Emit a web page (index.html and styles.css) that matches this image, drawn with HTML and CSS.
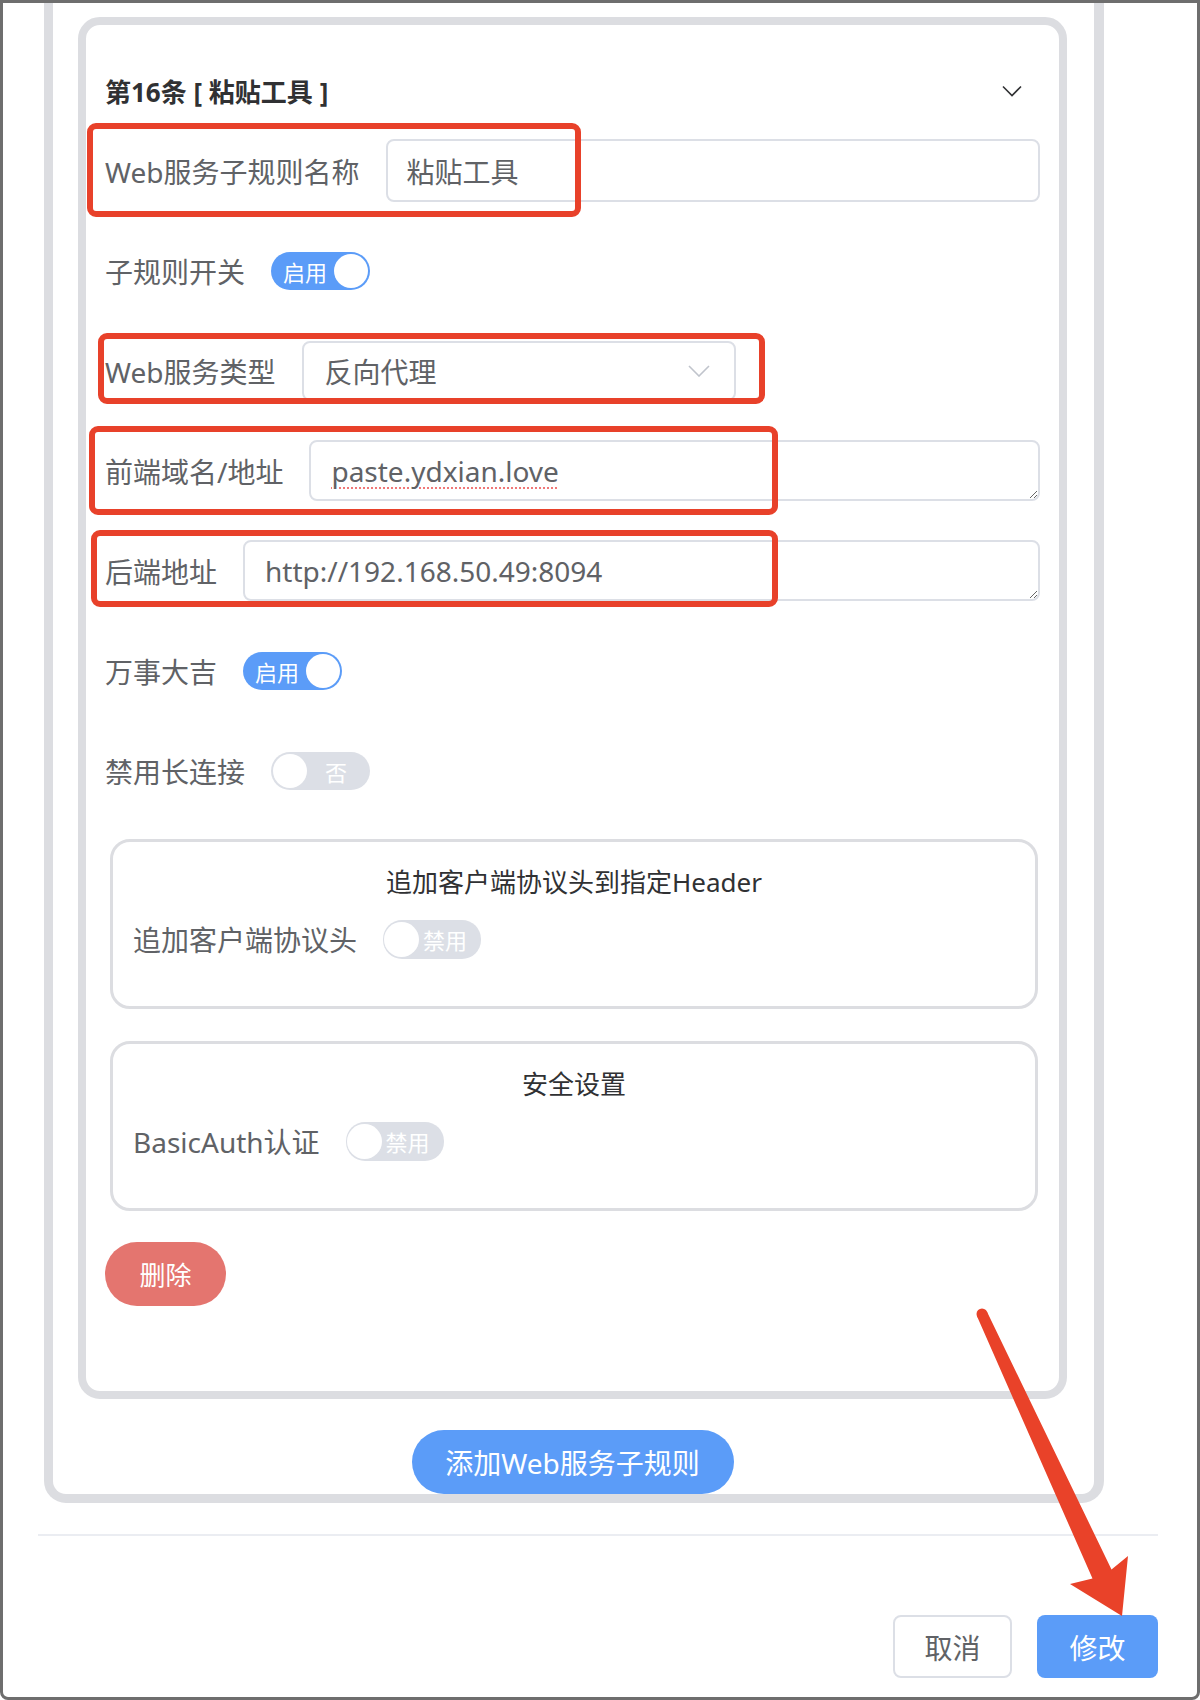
FILE: index.html
```html
<!DOCTYPE html>
<html lang="zh-CN">
  <head>
    <meta charset="UTF-8" />
    <meta name="viewport" content="width=device-width, initial-scale=1.0" />
    <title>编辑Web服务规则</title>
    <link rel="stylesheet" href="styles.css">
  </head>
  <body>
    <div class="modal">
      <div class="rule-list">
        <div class="rule-card">
          <div class="rule-head">
            <span class="rule-title">第16条 [ 粘贴工具 ]</span>
            <svg class="head-arrow" width="20" height="12" viewBox="0 0 20 12">
              <path d="M1 1.5 L10 10.5 L19 1.5" fill="none" stroke="#303133" stroke-width="1.6" />
            </svg>
          </div>

          <div class="form-item">
            <label class="form-label">Web服务子规则名称</label>
            <div class="input">粘贴工具</div>
            <div class="mark mark-name"></div>
          </div>

          <div class="form-item">
            <label class="form-label">子规则开关</label>
            <div class="switch on"><span class="switch-text">启用</span><span class="knob"></span></div>
          </div>

          <div class="form-item">
            <label class="form-label">Web服务类型</label>
            <div class="select">
              <span>反向代理</span>
              <svg width="22" height="12" viewBox="0 0 22 12">
                <path d="M1 1 L11 11 L21 1" fill="none" stroke="#c0c4cc" stroke-width="1.6" />
              </svg>
            </div>
            <div class="mark mark-type"></div>
          </div>

          <div class="form-item">
            <label class="form-label">前端域名/地址</label>
            <div class="textarea"><span class="spell">paste.ydxian.love</span></div>
            <div class="mark mark-front"></div>
          </div>

          <div class="form-item">
            <label class="form-label">后端地址</label>
            <div class="textarea">http://192.168.50.49:8094</div>
            <div class="mark mark-back"></div>
          </div>

          <div class="form-item">
            <label class="form-label">万事大吉</label>
            <div class="switch on"><span class="switch-text">启用</span><span class="knob"></span></div>
          </div>

          <div class="form-item">
            <label class="form-label">禁用长连接</label>
            <div class="switch off"><span class="knob"></span><span class="switch-text">否</span></div>
          </div>

          <div class="sub-section">
            <div class="sub-title">追加客户端协议头到指定Header</div>
            <div class="sub-row">
              <label class="form-label">追加客户端协议头</label>
              <div class="switch off small"><span class="knob"></span><span class="switch-text">禁用</span></div>
            </div>
          </div>

          <div class="sub-section">
            <div class="sub-title">安全设置</div>
            <div class="sub-row">
              <label class="form-label">BasicAuth认证</label>
              <div class="switch off small"><span class="knob"></span><span class="switch-text">禁用</span></div>
            </div>
          </div>

          <button class="btn-delete">删除</button>
        </div>

        <div class="add-wrap">
          <button class="btn-add">添加Web服务子规则</button>
        </div>
      </div>

      <div class="divider"></div>

      <div class="footer">
        <button class="btn btn-cancel">取消</button>
        <button class="btn btn-primary">修改</button>
      </div>
    </div>

    <!-- annotation arrow pointing at the submit button -->
    <svg class="note-arrow" width="1200" height="1700" viewBox="0 0 1200 1700">
      <circle cx="982" cy="1314" r="5.5" fill="#e94229" />
      <polygon
        fill="#e94229"
        points="977,1316.3 1092.5,1578.5 1070,1584 1122,1616 1128,1556 1111.5,1569.5 987,1311.7"
      />
    </svg>
  </body>
</html>
```

FILE: styles.css
```css
body {
  margin: 0;
  padding: 0;
  font-family: "Noto Sans", "Noto Sans CJK SC", sans-serif;
  color: #606266;
  background: #fff;
  position: relative;
}
button {
  font-family: inherit;
  border: none;
  cursor: pointer;
}
.modal {
  height: 1700px;
  box-sizing: border-box;
  border: 3px solid #6e6e6e;
  border-radius: 0 0 8px 8px;
  background: #fff;
}
.rule-list {
  margin: 0 93px 0 41px;
  padding: 14px 27px 0 25px;
  border: 9px solid #dcdde1;
  border-right-width: 10px;
  border-top: none;
  border-radius: 0 0 22px 22px;
}
.rule-card {
  border: 8px solid #dcdde1;
  border-radius: 22px;
  padding: 40px 19px 85px;
}
.rule-head {
  display: flex;
  align-items: center;
  justify-content: space-between;
  height: 52px;
  margin-bottom: 22px;
  padding-right: 18px;
}
.rule-title {
  font-size: 26px;
  font-weight: 700;
  color: #303133;
}
.form-item {
  position: relative;
  display: flex;
  align-items: center;
  height: 63px;
  margin-bottom: 37px;
}
.form-item:last-of-type {
  margin-bottom: 38px;
}
.form-label {
  font-size: 28px;
  color: #606266;
  padding-right: 26px;
  white-space: nowrap;
}
.input,
.textarea,
.select {
  box-sizing: border-box;
  border: 2px solid #dcdfe6;
  border-radius: 8px;
  font-size: 28px;
  color: #606266;
  display: flex;
  align-items: center;
}
.input {
  flex: 1;
  height: 63px;
  padding-left: 19px;
}
.textarea {
  flex: 1;
  height: 61px;
  padding-left: 20px;
  overflow: hidden;
  resize: vertical;
}
.spell {
  text-decoration: underline dotted #f07878;
  text-decoration-thickness: 2px;
  text-underline-offset: 6px;
}
.select {
  width: 434px;
  height: 60px;
  padding: 0 24px 0 21px;
  justify-content: space-between;
}
.mark {
  position: absolute;
  border: 6px solid #e8412a;
  border-radius: 9px;
  pointer-events: none;
}
.mark-name {
  left: -18px;
  top: -16px;
  width: 482px;
  height: 82px;
}
.mark-type {
  left: -7px;
  top: -6px;
  width: 655px;
  height: 59px;
}
.mark-front {
  left: -16px;
  top: -13px;
  width: 677px;
  height: 77px;
}
.mark-back {
  left: -14px;
  top: -9px;
  width: 675px;
  height: 65px;
}
.switch {
  box-sizing: border-box;
  width: 99px;
  height: 38px;
  border-radius: 19px;
  display: flex;
  align-items: center;
  padding: 0 2px;
  font-size: 22px;
  color: #fff;
}
.switch.on {
  background: #5b9cf8;
}
.switch.on .switch-text {
  margin-left: 10px;
}
.switch.on .knob {
  margin-left: auto;
}
.switch.off {
  background: #dcdfe6;
}
.switch.off .switch-text {
  margin-left: 18px;
}
.knob {
  width: 34px;
  height: 34px;
  border-radius: 50%;
  background: #fff;
}
.switch.small {
  width: 98px;
  height: 39px;
  padding: 0 1px;
}
.switch.small .knob {
  width: 35px;
  height: 35px;
}
.switch.small .switch-text {
  margin-left: 4px;
}
.sub-section {
  margin: 0 2px 32px 5px;
  border: 3px solid #dcdde1;
  border-radius: 20px;
  padding: 20px 0 47px 20px;
}
.sub-section + .sub-section {
  margin-bottom: 31px;
}
.sub-title {
  text-align: center;
  font-size: 26px;
  line-height: 40px;
  color: #303133;
  margin-left: -20px;
}
.sub-row {
  display: flex;
  align-items: center;
  height: 40px;
  margin-top: 17px;
}
.btn-delete {
  width: 121px;
  height: 64px;
  border-radius: 32px;
  background: #e4756f;
  color: #fff;
  font-size: 26px;
}
.add-wrap {
  display: flex;
  justify-content: center;
  padding-top: 31px;
}
.btn-add {
  width: 322px;
  height: 64px;
  border-radius: 32px;
  background: #5b9cf8;
  color: #fff;
  font-size: 28px;
}
.divider {
  height: 2px;
  background: #ebedf2;
  margin: 31px 39px 0 35px;
}
.footer {
  display: flex;
  justify-content: flex-end;
  gap: 25px;
  margin-top: 79px;
  padding-right: 39px;
}
.btn {
  height: 63px;
  border-radius: 8px;
  font-size: 28px;
  box-sizing: border-box;
}
.btn-cancel {
  width: 119px;
  background: #fff;
  border: 2px solid #dcdfe6;
  color: #606266;
}
.btn-primary {
  width: 121px;
  background: #5b9cf8;
  color: #fff;
}
.note-arrow {
  position: absolute;
  left: 0;
  top: 0;
  pointer-events: none;
}
```
